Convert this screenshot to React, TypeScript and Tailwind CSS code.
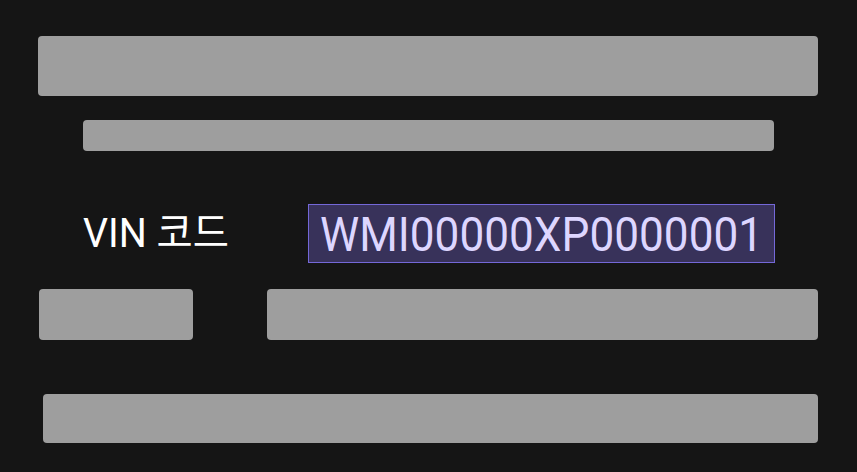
import React from "react";

const App: React.FC = () => {
  return (
    <div
      className="w-[857px] h-[472px] bg-[#151515] overflow-hidden flex flex-col"
      style={{ fontFamily: "Roboto, 'Noto Sans CJK KR', sans-serif" }}
    >
      <div className="ml-[38px] mt-[36px] w-[780px] h-[60px] rounded-[4px] bg-[#9e9e9e]" />
      <div className="ml-[83px] mt-[24px] w-[691px] h-[31px] rounded-[4px] bg-[#9e9e9e]" />

      <div className="mt-[53px] flex items-center h-[59px]">
        <div className="ml-[83px] w-[225px]">
          <span className="inline-block origin-left scale-x-[0.96] text-[41px] leading-none text-white whitespace-nowrap">
            VIN 코드
          </span>
        </div>
        <div className="w-[467px] h-[59px] flex items-center border border-[#7468d8] bg-[#38325a] pl-[11px] overflow-hidden">
          <span className="inline-block origin-left scale-x-[0.92] text-[48px] leading-none text-[#ddd6ff] whitespace-nowrap pt-[3px]">
            WMI00000XP0000001
          </span>
        </div>
      </div>

      <div className="mt-[26px] flex h-[51px]">
        <div className="ml-[39px] w-[154px] rounded-[4px] bg-[#9e9e9e]" />
        <div className="ml-[74px] w-[551px] rounded-[4px] bg-[#9e9e9e]" />
      </div>

      <div className="ml-[43px] mt-[54px] w-[775px] h-[49px] rounded-[4px] bg-[#9e9e9e]" />
    </div>
  );
};

export default App;
